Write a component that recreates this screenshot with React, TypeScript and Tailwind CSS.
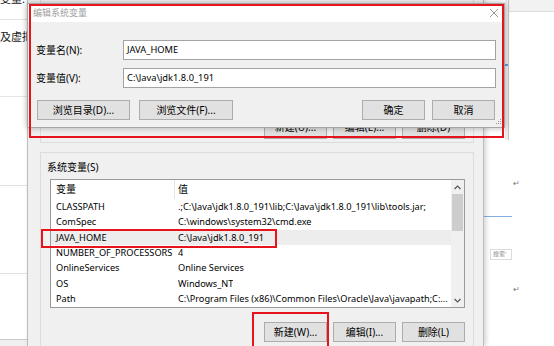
import React from 'react';

const rows: [string, string][] = [
  ['CLASSPATH', String.raw`.;C:\Java\jdk1.8.0_191\lib;C:\Java\jdk1.8.0_191\lib\tools.jar;`],
  ['ComSpec', String.raw`C:\windows\system32\cmd.exe`],
  ['JAVA_HOME', String.raw`C:\Java\jdk1.8.0_191`],
  ['NUMBER_OF_PROCESSORS', '4'],
  ['OnlineServices', 'Online Services'],
  ['OS', 'Windows_NT'],
  ['Path', String.raw`C:\Program Files (x86)\Common Files\Oracle\Java\javapath;C:...`],
];

function WinButton({ label, className = '' }: { label: string; className?: string }) {
  return (
    <div
      className={`h-[20px] flex items-center justify-center bg-[#e1e1e1] border border-[#adadad] text-[10px] leading-none ${className}`}
    >
      {label}
    </div>
  );
}

function LeftStrip() {
  return (
    <div className="w-[27px] flex flex-col overflow-hidden text-[11px] leading-[14px] text-[#222]">
      <div className="h-[20px] border-b border-[#e2e2e2]">
        <div className="-mt-[8px] whitespace-nowrap">变量.</div>
      </div>
      <div className="h-[77px] border-b border-[#e6e6e6] pt-[10px] whitespace-nowrap">及虚拟</div>
      <div className="h-[89px] border-b border-[#e2e2e2]" />
      <div className="h-[88px] border-b border-[#e2e2e2]" />
      <div className="h-[66px] border-b border-[#c8c8c8]" />
      <div className="flex-1 bg-[#f0f0f0]" />
    </div>
  );
}

function RightDoc() {
  return (
    <div className="w-[71px] flex flex-col">
      <div className="h-[140px] flex">
        <div className="w-[22px]" />
        <div className="w-[4px] bg-[#ececec] border-r border-[#c6c6c6] flex flex-col">
          <div className="mt-[64px] h-[2px] bg-[#5b9bd5]" />
        </div>
        <div className="flex-1 flex flex-col">
          <div className="h-[12px] bg-[#f2f2f2] border-b border-[#dedede]" />
        </div>
      </div>
      <div className="pl-[30px] mt-[38px] text-[8px] leading-[10px] text-[#777]">↵</div>
      <div className="mt-[28px] h-[1px] ml-[1px] w-[28px] bg-[#7fb2e0]" />
      <div className="mt-[32px] ml-[7px] w-[22px] h-[11px] border border-[#dcdcdc] text-[6px] leading-[9px] text-[#888] pl-[2px] overflow-hidden whitespace-nowrap">
        搜索'
      </div>
      <div className="pl-[30px] mt-[24px] text-[8px] leading-[10px] text-[#777]">↵</div>
    </div>
  );
}

function BackDialog() {
  return (
    <div className="absolute left-[27px] top-0 w-[457px] h-[346px] bg-[#f0f0f0] border-x border-[#bcbcbc] shadow-[2px_0_5px_rgba(0,0,0,0.18)] flex flex-col pl-[12px] pr-[9px]">
      <div className="h-[143px] border-x border-b border-[#dcdcdc] pt-[114px] pr-[8px] flex justify-end gap-[6px]">
        <WinButton label="新建(U)..." className="w-[63px] h-[25px]" />
        <WinButton label="编辑(E)..." className="w-[63px] h-[25px]" />
        <WinButton label="删除(D)" className="w-[63px] h-[25px]" />
      </div>
      <div className="mt-[9px] flex-1 border-x border-t border-[#dcdcdc] pt-[7px] pl-[6px] pr-[8px] flex flex-col">
        <div className="h-[14px] text-[10px] leading-[14px]">系统变量(S)</div>
        <div className="mt-[5px] ml-[3px] h-[129px] bg-white border border-[#9a9a9a] flex">
          <div className="flex-1 flex flex-col overflow-hidden text-[9.2px]">
            <div className="h-[19px] flex items-center text-[10px]">
              <div className="w-[124px] shrink-0 h-full pl-[5px] flex items-center border-r border-[#e5e5e5]">变量</div>
              <div className="pl-[3px]">值</div>
            </div>
            {rows.map(([name, value]) => (
              <div
                key={name}
                className={`h-[15.5px] flex items-center whitespace-nowrap ${name === 'JAVA_HOME' ? 'bg-[#ededed]' : ''}`}
              >
                <div className="w-[124px] shrink-0 pl-[5px] overflow-hidden">{name}</div>
                <div className="pl-[3px] overflow-hidden">{value}</div>
              </div>
            ))}
          </div>
          <div className="w-[13px] bg-[#f0f0f0] flex flex-col">
            <div className="h-[14px] flex items-center justify-center">
              <svg width="7" height="5" viewBox="0 0 7 5">
                <path d="M0.5 4 L3.5 1 L6.5 4" fill="none" stroke="#555" strokeWidth="1.2" />
              </svg>
            </div>
            <div className="h-[37px] mx-[1px] bg-[#cdcdcd]" />
            <div className="flex-1" />
            <div className="h-[14px] flex items-center justify-center">
              <svg width="7" height="5" viewBox="0 0 7 5">
                <path d="M0.5 1 L3.5 4 L6.5 1" fill="none" stroke="#555" strokeWidth="1.2" />
              </svg>
            </div>
          </div>
        </div>
        <div className="mt-[14px] flex justify-end gap-[6px]">
          <WinButton label="新建(W)..." className="w-[63px]" />
          <WinButton label="编辑(I)..." className="w-[63px]" />
          <WinButton label="删除(L)" className="w-[63px]" />
        </div>
      </div>
    </div>
  );
}

function EditDialog() {
  return (
    <div className="absolute left-[27px] top-[3px] w-[478px] h-[125px] bg-[#f0f0f0] border border-[#a5a5a5] shadow-[0_0_6px_rgba(0,0,0,0.3)] flex flex-col">
      <div className="h-[18px] bg-white flex items-center justify-between pl-[5px] pr-[5px]">
        <span className="text-[9px] text-[#a0a0a0]">编辑系统变量</span>
        <svg width="10" height="10" viewBox="0 0 10 10">
          <path d="M1 1 L9 9 M9 1 L1 9" stroke="#8a8a8a" strokeWidth="0.9" />
        </svg>
      </div>
      <div className="flex-1 flex flex-col px-[8px] text-[10px]">
        <div className="mt-[18px] flex items-center">
          <div className="w-[87px]">变量名(N):</div>
          <div className="flex-1 h-[20px] bg-white border border-[#a3a3a3] pl-[3px] flex items-center text-[9.3px]">
            JAVA_HOME
          </div>
        </div>
        <div className="mt-[8px] flex items-center">
          <div className="w-[87px]">变量值(V):</div>
          <div className="flex-1 h-[20px] bg-white border border-[#a3a3a3] pl-[3px] flex items-center text-[9.3px]">
            {String.raw`C:\Java\jdk1.8.0_191`}
          </div>
        </div>
        <div className="mt-[12px] flex items-center pl-[1px] pr-[1px]">
          <WinButton label="浏览目录(D)..." className="w-[93px]" />
          <WinButton label="浏览文件(F)..." className="w-[94px] ml-[9px]" />
          <WinButton label="确定" className="w-[63px] ml-auto" />
          <WinButton label="取消" className="w-[63px] ml-[7px]" />
        </div>
      </div>
      <svg className="absolute right-[2px] bottom-[2px]" width="6" height="6" viewBox="0 0 6 6">
        <rect x="4" y="0" width="1" height="1" fill="#9a9a9a" />
        <rect x="2" y="2" width="1" height="1" fill="#9a9a9a" />
        <rect x="4" y="2" width="1" height="1" fill="#9a9a9a" />
        <rect x="0" y="4" width="1" height="1" fill="#9a9a9a" />
        <rect x="2" y="4" width="1" height="1" fill="#9a9a9a" />
        <rect x="4" y="4" width="1" height="1" fill="#9a9a9a" />
      </svg>
    </div>
  );
}

export default function App() {
  return (
    <div className="relative w-[554px] h-[346px] overflow-hidden bg-white text-black font-['Noto_Sans','Noto_Sans_CJK_SC',sans-serif]">
      <div className="flex h-full">
        <LeftStrip />
        <div className="flex-1" />
        <RightDoc />
      </div>
      <BackDialog />
      <EditDialog />
      {/* red annotation boxes */}
      <div className="absolute left-[29px] top-[4px] w-[475px] h-[134px] border-2 border-[#e8141c]" />
      <div className="absolute left-[41px] top-[229px] w-[236px] h-[19px] border-2 border-[#e8141c]" />
      <div className="absolute left-[252px] top-[312px] w-[77px] h-[40px] border-2 border-[#e8141c]" />
    </div>
  );
}
